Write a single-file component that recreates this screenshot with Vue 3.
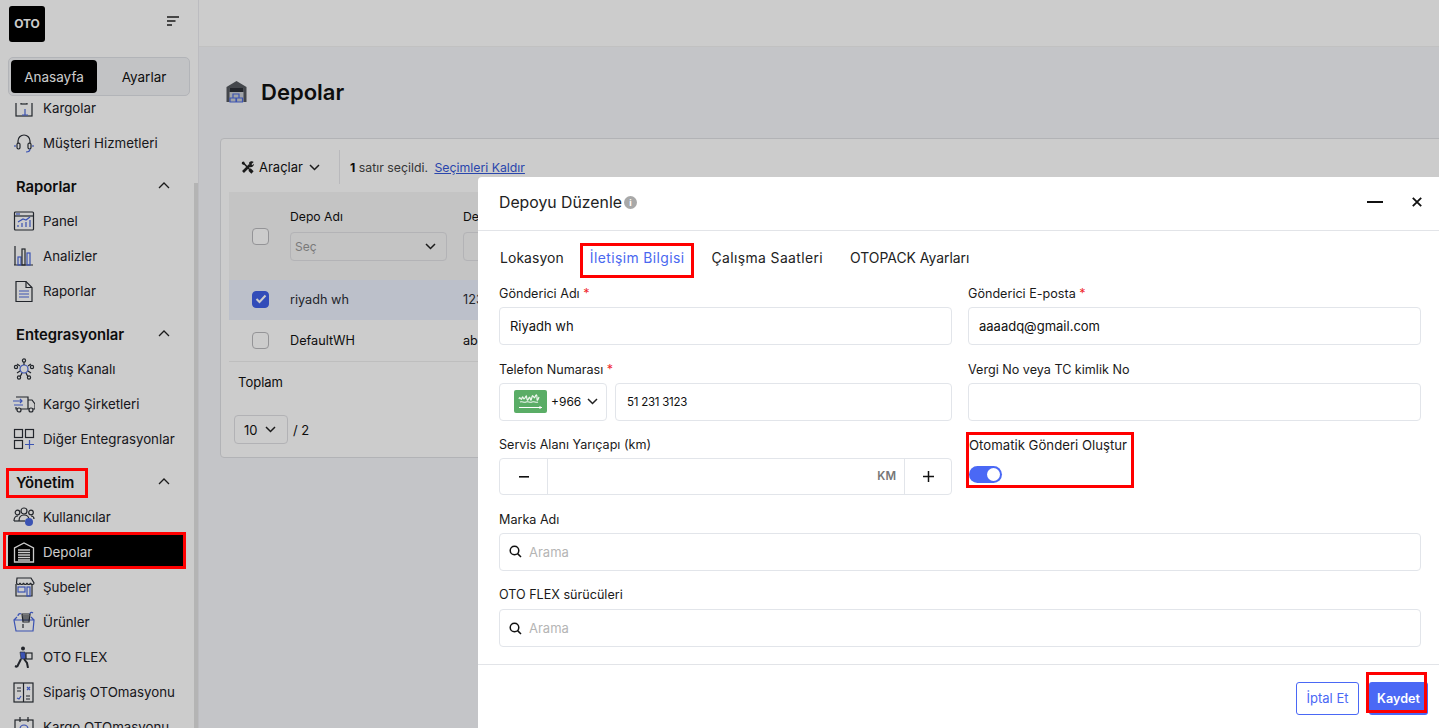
<script setup>
const blue = '#4a68e0'
const dk = '#2b2f36'
const s = `fill="none" stroke="${dk}" stroke-width="1.2"`
const b = `fill="none" stroke="${blue}" stroke-width="1.2"`
const icons = {
  box: `<rect x="3" y="2" width="16" height="17" ${s}/><rect x="8" y="2" width="6" height="5" ${s}/><path d="M12 12v6M9 18h6" ${b}/>`,
  head: `<path d="M5 12V9a6 6 0 0 1 12 0v3" ${s}/><rect x="4" y="11" width="3" height="6" rx="1.4" ${s}/><rect x="15" y="11" width="3" height="6" rx="1.4" ${s}/><path d="M2 13v2M20 13v2M17 17c0 2-2 3-4 3" ${b}/>`,
  panel: `<rect x="1.5" y="2" width="19" height="18" rx="1" ${s}/><path d="M2 6h18" ${s}/><path d="M3 4h4" ${b}/><path d="M5 17v-2M9 17v-4M13 17v-5M17 17v-7M5 12l5-3 3 1 4-3" ${b}/>`,
  bars: `<path d="M1 20h19M2 1v19" ${s}/><rect x="5" y="12" width="3" height="8" ${b}/><rect x="9" y="4" width="3" height="16" ${s}/><rect x="14" y="8" width="3" height="12" ${b}/>`,
  doc: `<path d="M3 1.5h10l6 6v14H3z" ${s}/><path d="M13 1.5v6h6" ${s}/><path d="M6 11h10M6 14h10M6 17h10" ${b}/>`,
  hub: `<circle cx="11" cy="11" r="4" ${b} stroke-width="2"/><path d="M7 8 4 6M15 8l3-2M7 13l-3 2M15 13l3 2M11 7V4M9 15l-2 4M13 15l2 4" ${s}/><circle cx="3" cy="9" r="1.6" ${s}/><circle cx="19" cy="9" r="1.6" ${s}/><circle cx="11" cy="2.5" r="1.6" ${s}/><circle cx="6" cy="19.5" r="1.6" ${s}/><circle cx="16" cy="19.5" r="1.6" ${s}/>`,
  truck: `<path d="M3 4h12v12H8M3 14v2h1M15 7h4l3 4v5h-2M15 16h1" ${s}/><circle cx="6" cy="17" r="2" ${s}/><circle cx="18" cy="17" r="2" ${s}/><path d="M0 8h9M7 6l2 2-2 2M1 12h9" ${b}/>`,
  grid: `<rect x="1.5" y="1.5" width="8" height="8" ${s}/><rect x="12.5" y="1.5" width="8" height="8" ${s}/><rect x="1.5" y="12.5" width="8" height="8" ${s}/><path d="M16.5 12v9M12 16.5h9" ${b}/>`,
  users: `<circle cx="11" cy="5" r="3" ${s}/><circle cx="4.5" cy="6.5" r="2.3" ${s}/><circle cx="18" cy="6.5" r="2.3" ${s}/><path d="M1 15c0-3 1-5 4-5M21 13c0-2-1-3-3-3M6 15c0-4 2-6 5-6s5 2 5 5" ${s}/><path d="M1 15h11" ${s}/><circle cx="16" cy="16" r="4" fill="${blue}"/>`,
  ware: `<path d="M1.5 21V7L11 2l9.5 5v14z" fill="none" stroke="#fff" stroke-width="1.3"/><path d="M5 9h12M5 11.5h12M5 14h12M5 16.5h12M5 19h12" stroke="#fff" stroke-width="1.5"/>`,
  shop: `<path d="M3 8v12h16V8" ${s}/><path d="M4 2h14l3 5c0 2-3 2-3.500 0-.5 2-3 2-3.500 0-.5 2-3 2-3.500 0-.5 2-3 2-3.500 0-.5 2-3 2-3.500 0z" ${s}/><rect x="5" y="11" width="7" height="5" ${b}/><rect x="14" y="11" width="3" height="9" ${b}/>`,
  prod: `<path d="M1 9h20l-1 11H3zM1 9l3-3M21 9l-3-3" ${b}/><path d="M9 3h8l-1 8h-6z" ${s}/><path d="M11 4v6M13 4v6M15 4v6" ${s}/><path d="M5 5c0-2 2-3 3-2M17 3c0-2 2-2 3-1" ${b}/><path d="M10 13v4" ${s}/>`,
  flex: `<circle cx="10" cy="2.500" r="2" fill="${dk}"/><path d="M7 6h5l1 7H8z" fill="${blue}" stroke="${dk}" stroke-width=".6"/><rect x="13" y="7" width="6" height="6" ${s}/><path d="M8 13l-4 8M11 13l3 4 1 5M4 21l-2-1" stroke="${dk}" stroke-width="2" fill="none"/>`,
  auto: `<rect x="1" y="2" width="19" height="19" ${s}/><path d="M10.500 2v19" ${s}/><path d="M4 7h4M4 10h4M13 15h4M13 18h4" ${s}/><path d="M14 6l3 3M17 6l-3 3M4 17l2 1 2-3" ${b}/>`,
  cargo: `<rect x="2" y="4" width="18" height="15" ${s}/><path d="M7 1v5M15 1v5" ${s}/><circle cx="11" cy="13" r="4" ${b}/>`,
}
const sections = [
  { items: [{ t: 'Kargolar', i: 'box' }, { t: 'Müşteri Hizmetleri', i: 'head' }] },
  { title: 'Raporlar', items: [{ t: 'Panel', i: 'panel' }, { t: 'Analizler', i: 'bars' }, { t: 'Raporlar', i: 'doc' }] },
  { title: 'Entegrasyonlar', items: [{ t: 'Satış Kanalı', i: 'hub' }, { t: 'Kargo Şirketleri', i: 'truck' }, { t: 'Diğer Entegrasyonlar', i: 'grid' }] },
  { title: 'Yönetim', items: [{ t: 'Kullanıcılar', i: 'users' }, { t: 'Depolar', i: 'ware', active: true }, { t: 'Şubeler', i: 'shop' }, { t: 'Ürünler', i: 'prod' }, { t: 'OTO FLEX', i: 'flex' }, { t: 'Sipariş OTOmasyonu', i: 'auto' }, { t: 'Kargo OTOmasyonu', i: 'cargo' }] },
]
const tabs = ['Lokasyon', 'İletişim Bilgisi', 'Çalışma Saatleri', 'OTOPACK Ayarları']
</script>

<template>
  <div class="app">
    <aside class="side">
      <div class="side-top">
        <div class="logo">OTO</div>
        <svg class="burger" width="12" height="11" viewBox="0 0 12 11"><path d="M0 1h12M0 5h8.500M0 9h5" stroke="#222" stroke-width="1.500" fill="none"/></svg>
      </div>
      <div class="seg">
        <div class="seg-btn on">Anasayfa</div>
        <div class="seg-btn off">Ayarlar</div>
      </div>
      <nav class="nav">
        <div class="nav-in">
          <section v-for="(sec, n) in sections" :key="n" :class="['sec', { titled: sec.title }]">
            <div v-if="sec.title" class="sec-title">
              <span>{{ sec.title }}</span>
              <svg width="12" height="7" viewBox="0 0 12 7"><path d="M1 6l5-5 5 5" fill="none" stroke="#222" stroke-width="1.300"/></svg>
            </div>
            <div v-for="it in sec.items" :key="it.t" :class="['item', { active: it.active }]">
              <svg class="ico" width="22" height="22" viewBox="0 0 22 22" v-html="icons[it.i]"></svg>
              <span>{{ it.t }}</span>
            </div>
          </section>
        </div>
        <div class="sbar"></div>
      </nav>
    </aside>

    <main class="main">
      <div class="topbar"></div>
      <div class="page-head">
        <svg width="21" height="23" viewBox="0 0 21 23">
          <path d="M.5 22V7l10-6 10 6v15z" fill="#55595f"/>
          <rect x="3.500" y="8" width="14" height="14" fill="#c9ccd2"/>
          <rect x="3.500" y="8" width="14" height="4" fill="#2b2f36"/>
          <path d="M7 14h6v4H7zM4 18h6v4H4zM10.500 18h6v4h-6z" fill="#c9ccd2" stroke="#4a68e0" stroke-width="1.200"/>
        </svg>
        <h1>Depolar</h1>
      </div>
      <div class="card">
        <div class="tools">
          <div class="tool-btn">
            <svg width="13" height="13" viewBox="0 0 13 13">
              <path d="M2 1.500 10 10" stroke="#222" stroke-width="1.500"/>
              <path d="M8.500 8.500 11.500 11.500" stroke="#222" stroke-width="3.200"/>
              <path d="M1 1l2-.5L4 3 3 4 .8 3z" fill="#222"/>
              <path d="M2 11 9 4" stroke="#222" stroke-width="2.600"/>
              <path d="M8 1.700A3 3 0 0 1 12.700 1L10.500 3l.7 1.200 1.600-1.500A3 3 0 0 1 8.800 6z" fill="#222"/>
            </svg>
            <span>Araçlar</span>
            <svg width="11" height="7" viewBox="0 0 11 7"><path d="M1 1l4.500 4.500L10 1" fill="none" stroke="#222" stroke-width="1.500"/></svg>
          </div>
          <div class="tool-info"><b>1</b> satır seçildi. <a>Seçimleri Kaldır</a></div>
        </div>
        <div class="tbl-head">
          <span class="chk"></span>
          <div class="col-a">
            <div class="th">Depo Adı</div>
            <div class="sel"><span>Seç</span><svg width="11" height="7" viewBox="0 0 11 7"><path d="M1 1l4.500 4.500L10 1" fill="none" stroke="#222" stroke-width="1.500"/></svg></div>
          </div>
          <div class="col-b">
            <div class="th">Depo Kodu</div>
            <div class="sel"></div>
          </div>
        </div>
        <div class="row picked">
          <span class="chk on"><svg width="12" height="10" viewBox="0 0 12 10"><path d="M1.500 5l3 3 6-6.500" fill="none" stroke="#fff" stroke-width="2"/></svg></span>
          <span class="col-a">riyadh wh</span>
          <span class="col-b">123456</span>
        </div>
        <div class="row last">
          <span class="chk"></span>
          <span class="col-a">DefaultWH</span>
          <span class="col-b">abcdef</span>
        </div>
        <div class="total">Toplam</div>
        <div class="pager">
          <div class="size"><span>10</span><svg width="11" height="7" viewBox="0 0 11 7"><path d="M1 1l4.500 4.500L10 1" fill="none" stroke="#222" stroke-width="1.500"/></svg></div>
          <span>/ 2</span>
        </div>
      </div>
    </main>

    <div class="shade"></div>

    <div class="modal">
      <header class="m-head">
        <div class="m-title">Depoyu Düzenle<span class="info">i</span></div>
        <div class="m-acts">
          <svg width="16" height="2" viewBox="0 0 16 2"><rect width="16" height="2" fill="#111"/></svg>
          <svg width="10" height="10" viewBox="0 0 10 10"><path d="M.8.8l8.400 8.400M9.200.8.8 9.200" stroke="#111" stroke-width="1.800"/></svg>
        </div>
      </header>
      <div class="m-tabs">
        <span v-for="(t, i) in tabs" :key="t" :class="['tab', { cur: i === 1 }]">{{ t }}</span>
      </div>
      <div class="form">
        <div class="f">
          <label>Gönderici Adı <i>*</i></label>
          <div class="inp">Riyadh wh</div>
        </div>
        <div class="f">
          <label>Gönderici E-posta <i>*</i></label>
          <div class="inp">aaaadq@gmail.com</div>
        </div>
        <div class="f">
          <label>Telefon Numarası <i>*</i></label>
          <div class="tel">
            <div class="inp code">
              <svg width="33" height="23" viewBox="0 0 33 23">
                <rect width="33" height="23" rx="2" fill="#5aad66"/>
                <path d="M5 9c1-4 2 3 3-1s1 3 3 0 1-3 2 1 2-4 3-1 1 3 2-1 2 3 3 0 2-3 2 1 1 2 2-1M6 12c2-1 4 1 6 0s4 1 6 0 4 1 6 0" stroke="#eef7ef" stroke-width="1.200" fill="none"/>
                <path d="M5 17.500h21M26 16v3M28 17.500h-2" stroke="#fff" stroke-width="1" fill="none"/>
              </svg>
              <span>+966</span>
              <svg width="11" height="7" viewBox="0 0 11 7"><path d="M1 1l4.500 4.500L10 1" fill="none" stroke="#222" stroke-width="1.500"/></svg>
            </div>
            <div class="inp grow">51 231 3123</div>
          </div>
        </div>
        <div class="f">
          <label>Vergi No veya TC kimlik No</label>
          <div class="inp"></div>
        </div>
        <div class="f">
          <label>Servis Alanı Yarıçapı (km)</label>
          <div class="stepper">
            <div class="st-btn">
              <svg width="10" height="2" viewBox="0 0 10 2"><rect width="10" height="1.600" fill="#111"/></svg>
            </div>
            <div class="st-mid">KM</div>
            <div class="st-btn end">
              <svg width="11" height="11" viewBox="0 0 11 11"><path d="M5.500 0v11M0 5.500h11" stroke="#111" stroke-width="1.500"/></svg>
            </div>
          </div>
        </div>
        <div class="f">
          <label class="nudge">Otomatik Gönderi Oluştur</label>
          <div class="toggle-wrap"><span class="toggle"><span class="knob"></span></span></div>
        </div>
        <div class="f wide">
          <label>Marka Adı</label>
          <div class="inp search">
            <svg width="13" height="13" viewBox="0 0 13 13"><circle cx="5.500" cy="5.500" r="4.300" fill="none" stroke="#111" stroke-width="1.500"/><path d="M8.600 8.600 12 12" stroke="#111" stroke-width="1.500"/></svg>
            <span>Arama</span>
          </div>
        </div>
        <div class="f wide">
          <label>OTO FLEX sürücüleri</label>
          <div class="inp search">
            <svg width="13" height="13" viewBox="0 0 13 13"><circle cx="5.500" cy="5.500" r="4.300" fill="none" stroke="#111" stroke-width="1.500"/><path d="M8.600 8.600 12 12" stroke="#111" stroke-width="1.500"/></svg>
            <span>Arama</span>
          </div>
        </div>
      </div>
      <footer class="m-foot">
        <div class="btn ghost">İptal Et</div>
        <div class="btn solid">Kaydet</div>
      </footer>
    </div>

    <div class="mark m-yon"></div>
    <div class="mark m-dep"></div>
    <div class="mark m-tab"></div>
    <div class="mark m-tog"></div>
    <div class="mark m-save"></div>
  </div>
</template>

<style scoped>
.app {
  position: relative;
  display: flex;
  width: 1439px;
  height: 728px;
  overflow: hidden;
  background: #f6f7fa;
  color: #111;
  font-family: Inter, "Noto Sans", sans-serif;
  font-size: 13px;
}
.side {
  flex: 0 0 199px;
  display: flex;
  flex-direction: column;
  background: #fff;
  border-right: 1px solid #ececf0;
  box-sizing: border-box;
}
.side-top {
  display: flex;
  flex: none;
  align-items: flex-start;
  justify-content: space-between;
  height: 57px;
  padding: 6px 19px 0 9px;
  box-sizing: border-box;
}
.logo {
  width: 36px;
  height: 36px;
  border-radius: 3px;
  background: #000;
  color: #fff;
  font-size: 12px;
  font-weight: 700;
  line-height: 36px;
  text-align: center;
}
.burger { margin-top: 10px; }
.seg {
  display: flex;
  flex: none;
  height: 39px;
  margin: 0 8px 7px;
  padding: 2px;
  border: 1px solid #dfe1e6;
  border-radius: 5px;
  background: #f3f4f7;
  box-sizing: border-box;
}
.seg-btn {
  display: flex;
  flex: 1;
  align-items: center;
  justify-content: center;
  border-radius: 4px;
  font-size: 13.500px;
}
.seg-btn.on { flex: 0 0 86px; background: #000; color: #fff; }
.seg-btn.off { padding-left: 4px; }
.nav { position: relative; flex: 1; overflow: hidden; }
.nav-in { margin-top: -13px; }
.sec.titled { margin-top: 8px; }
.sec-title {
  display: flex;
  align-items: center;
  justify-content: space-between;
  height: 35px;
  padding: 3px 28px 0 16px;
  font-size: 14.800px;
  font-weight: 600;
  box-sizing: border-box;
}
.sec-title svg { margin-top: -3px; }
.item {
  display: flex;
  align-items: center;
  gap: 8px;
  height: 35px;
  margin-right: 14px;
  margin-left: 8px;
  padding-left: 5px;
  border-radius: 3px 0 0 3px;
  font-size: 13.300px;
  color: #1c2026;
}
.ico { flex: none; width: 22px; height: 22px; }
.item.active { background: #000; color: #fff; }
.sbar {
  position: absolute;
  top: 80px;
  right: 0;
  bottom: 0;
  width: 4px;
  background: #e2e2e2;
}
.main { flex: 1; min-width: 0; overflow: hidden; }
.topbar {
  height: 47px;
  background: #fff;
  border-bottom: 1px solid #f2f2f2;
  box-sizing: border-box;
}
.page-head {
  display: flex;
  align-items: center;
  gap: 14px;
  height: 91px;
  padding: 0 0 2px 27px;
  box-sizing: border-box;
}
.page-head h1 { margin: 0; font-size: 22px; font-weight: 600; }
.card {
  width: 1300px;
  height: 320px;
  margin-left: 21px;
  border: 1px solid #dfe0e4;
  border-radius: 4px;
  background: #fff;
  box-sizing: border-box;
}
.tools {
  display: flex;
  align-items: center;
  height: 34px;
  margin-top: 11px;
  padding-left: 20px;
}
.tool-btn {
  display: flex;
  align-items: center;
  gap: 5px;
  width: 98px;
  height: 100%;
  border-right: 1px solid #e8e8ec;
  font-size: 13px;
}
.tool-btn svg:last-child { margin-left: 1px; }
.tool-info { padding-left: 10px; font-size: 12.300px; color: #444; }
.tool-info b { color: #111; font-weight: 700; }
.tool-info a { margin-left: 3px; color: #3558d8; text-decoration: underline; }
.tbl-head, .row {
  display: flex;
  align-items: center;
  margin-left: 8px;
  padding-left: 23px;
  box-sizing: border-box;
}
.tbl-head { height: 88px; margin-top: 8px; background: #f5f5f5; }
.chk {
  display: flex;
  flex: none;
  align-items: center;
  justify-content: center;
  width: 17px;
  height: 17px;
  border: 1px solid #b9b9bd;
  border-radius: 4px;
  background: #fff;
  box-sizing: border-box;
}
.chk.on { border-color: #3f5fe8; background: #3f5fe8; }
.col-a { width: 173px; margin-left: 21px; flex: none; font-size: 12.700px; }
.col-b { flex: none; width: 200px; font-size: 12.700px; }
.th { margin-bottom: 8px; font-size: 12.200px; }
.tbl-head .col-a, .tbl-head .col-b { margin-top: -3px; }
.sel {
  display: flex;
  align-items: center;
  justify-content: space-between;
  width: 157px;
  height: 29px;
  padding: 0 10px 0 4px;
  border: 1px solid #e0e0e4;
  border-radius: 4px;
  color: #999;
  box-sizing: border-box;
  font-size: 12px;
}
.row { height: 40px; }
.row.picked { padding-bottom: 2px; background: #ecf0fd; color: #2b2f36; }
.row.last { height: 42px; border-bottom: 1px solid #eeeeee; }
.total { padding: 12px 0 0 17px; font-size: 13px; line-height: 17px; }
.pager {
  display: flex;
  align-items: center;
  gap: 5px;
  margin: 24px 0 0 13px;
  font-size: 13px;
}
.size {
  display: flex;
  align-items: center;
  justify-content: space-between;
  width: 54px;
  height: 29px;
  padding: 0 11px 0 9px;
  border: 1px solid #dfdfe3;
  border-radius: 4px;
  box-sizing: border-box;
}
.shade {
  position: absolute;
  inset: 0;
  background: rgba(0, 0, 0, 0.2);
}
.modal {
  position: absolute;
  top: 177px;
  right: 0;
  bottom: 0;
  left: 478px;
  display: flex;
  flex-direction: column;
  border-radius: 4px 0 0 0;
  background: #fff;
}
.m-head {
  display: flex;
  flex: none;
  align-items: center;
  justify-content: space-between;
  height: 54px;
  padding: 0 17px 3px 21px;
  border-bottom: 1px solid #e2e4e8;
  box-sizing: border-box;
}
.m-title { display: flex; align-items: center; font-size: 15.800px; color: #222; }
.info {
  display: inline-block;
  width: 13px;
  height: 13px;
  margin-left: 2px;
  border-radius: 50%;
  background: #a8a8a8;
  color: #fff;
  font-size: 9px;
  font-weight: 700;
  line-height: 13px;
  text-align: center;
}
.m-acts { display: flex; align-items: center; gap: 29px; }
.m-tabs {
  display: flex;
  flex: none;
  align-items: center;
  gap: 27px;
  height: 56px;
  padding: 0 0 3px 22px;
  font-size: 13.900px;
  letter-spacing: 0.1px;
  color: #222;
  box-sizing: border-box;
}
.tab:nth-child(1) { margin-right: -1px; }
.tab:nth-child(2), .tab:nth-child(3) { letter-spacing: 0.4px; }
.tab:nth-child(4) { letter-spacing: 0; }
.tab.cur { color: #4a68f0; }
.form {
  display: grid;
  flex: none;
  grid-template-columns: 453px 453px;
  grid-auto-rows: 75.500px;
  column-gap: 16px;
  padding-left: 21px;
}
.f label {
  display: block;
  height: 14px;
  margin-bottom: 6px;
  font-size: 12.600px;
  line-height: 14px;
  color: #1a1a1a;
}
.f label.nudge { font-size: 13.200px; padding-left: 1px; }
.f label i { color: #f0282d; font-style: normal; }
.f.wide { grid-column: 1 / 3; margin-top: -1px; }
.f.wide:last-child label { margin-bottom: 7px; }
.inp {
  display: flex;
  align-items: center;
  height: 38px;
  padding: 0 10px;
  border: 1px solid #e2e5ea;
  border-radius: 4px;
  font-size: 13px;
  box-sizing: border-box;
}
.tel { display: flex; gap: 8px; }
.code { flex: 0 0 108px; gap: 4px; padding: 0 9px 0 14px; min-width: 0; }
.code span { font-size: 12px; }
.code svg:last-child { flex: none; margin-left: 2px; }
.code svg:first-child { flex: none; }
.grow { flex: 1; padding-left: 11px; font-size: 11.500px; letter-spacing: -0.25px; }
.stepper {
  display: flex;
  height: 37px;
  border: 1px solid #e2e5ea;
  border-radius: 4px;
  box-sizing: border-box;
}
.st-btn { display: flex; flex: 0 0 47px; align-items: center; justify-content: center; }
.st-btn.end { flex-basis: 46px; }
.st-mid {
  flex: 1;
  padding-right: 8px;
  border-right: 1px solid #e2e5ea;
  border-left: 1px solid #e2e5ea;
  color: #777;
  font-size: 11.500px;
  font-weight: 600;
  line-height: 35px;
  text-align: right;
}
.toggle-wrap { padding-top: 8px; }
.toggle {
  position: relative;
  display: block;
  width: 33px;
  height: 17px;
  border-radius: 9px;
  margin-left: 1px;
  background: #4a68f5;
}
.knob {
  position: absolute;
  top: 2px;
  right: 2px;
  width: 13px;
  height: 13px;
  border-radius: 50%;
  background: #fff;
}
.search { gap: 7px; padding-left: 9px; color: #b5b5b5; }
.search svg { flex: none; }
.m-foot {
  display: flex;
  flex: 1;
  align-items: flex-start;
  justify-content: flex-end;
  gap: 10px;
  margin-top: -1px;
  padding: 17px 11px 0 0;
  border-top: 1px solid #e2e4e8;
  background: #fff;
}
.btn {
  display: flex;
  align-items: center;
  justify-content: center;
  height: 33px;
  border-radius: 3px;
  font-size: 13px;
  box-sizing: border-box;
}
.ghost { width: 63px; border: 1px solid #4a68f5; color: #4a68f5; }
.solid { width: 59px; background: #4a68f5; color: #fff; font-weight: 600; font-size: 12.600px; }
.mark {
  position: absolute;
  border: 3px solid #f00;
  box-sizing: border-box;
  pointer-events: none;
}
.m-yon { top: 468px; left: 6px; width: 82px; height: 30px; }
.m-dep { top: 532px; left: 3px; width: 183px; height: 37px; }
.m-tab { top: 243px; left: 580px; width: 114px; height: 35px; }
.m-tog { top: 432px; left: 966px; width: 168px; height: 56px; }
.m-save { top: 672px; left: 1366px; width: 61px; height: 41px; }
</style>
